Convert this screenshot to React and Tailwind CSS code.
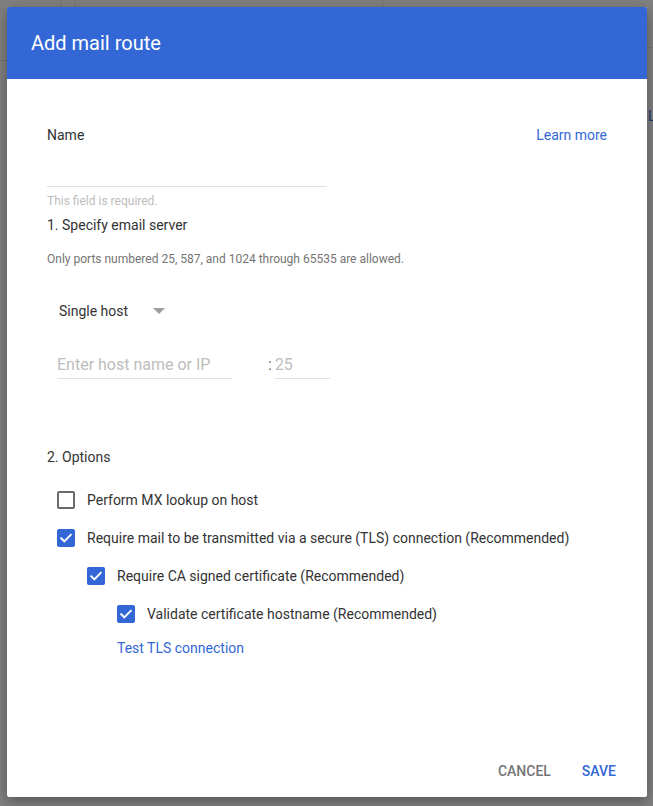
import React from 'react';

function Checkbox({ checked }) {
  if (!checked) {
    return <span className="block h-[18px] w-[18px] shrink-0 rounded-[2px] border-2 border-[#6b6b6b] bg-white" />;
  }
  return (
    <span className="flex h-[18px] w-[18px] shrink-0 items-center justify-center rounded-[2px] bg-[#3367d6]">
      <svg width="14" height="14" viewBox="0 0 14 14" fill="none">
        <path d="M2.2 7.3 L5.3 10.3 L11.8 3.8" stroke="white" strokeWidth="1.9" strokeLinecap="square" />
      </svg>
    </span>
  );
}

function OptionRow({ checked, label, indent }) {
  return (
    <div className={`flex h-[38px] items-center gap-3 ${indent}`}>
      <Checkbox checked={checked} />
      <span className="text-[14px] leading-5 text-[#333333]">{label}</span>
    </div>
  );
}

export default function App() {
  return (
    <div
      className="relative h-[806px] w-[653px] overflow-hidden bg-[#808080] p-[7px]"
      style={{ fontFamily: 'Roboto, "Liberation Sans", sans-serif' }}
    >
      {/* page behind the overlay */}
      <div className="absolute left-[60px] top-0 h-[7px] w-px bg-[#747474]" />
      <div className="absolute left-[75px] top-0 h-[7px] w-px bg-[#747474]" />
      <div className="absolute left-[382px] top-0 h-[7px] w-px bg-[#747474]" />
      <div className="absolute left-0 top-[60px] h-px w-[7px] bg-[#747474]" />
      <div className="absolute right-0 top-[47px] h-px w-[6px] bg-[#747474]" />
      <span className="absolute left-[648px] top-[106px] text-[14px] leading-5 text-[#1e3a6e]">L</span>

      <div className="relative flex h-[790px] w-[640px] flex-col overflow-hidden rounded-[2px] bg-white shadow-[0_4px_14px_rgba(0,0,0,0.35)]">
        <div className="flex h-[72px] shrink-0 items-center bg-[#3367d6] px-6">
          <h1 className="text-[20px] leading-7 text-white">Add mail route</h1>
        </div>

        <div className="flex-1 pl-10 pr-10 pt-[46px]">
          <div className="flex h-5 items-center justify-between">
            <span className="text-[14px] leading-5 text-[#333333]">Name</span>
            <span className="text-[14px] leading-5 text-[#3367d6]">Learn more</span>
          </div>
          <div className="h-[42px] w-[280px] border-b border-[#e0e0e0]" />
          <p className="mt-[6px] text-[12px] leading-4 text-[#bdbdbd]">This field is required.</p>
          <p className="mt-[6px] text-[14px] leading-5 text-[#333333]">1. Specify email server</p>
          <p className="mt-4 text-[12px] leading-4 text-[#757575]">
            Only ports numbered 25, 587, and 1024 through 65535 are allowed.
          </p>

          <div className="ml-3 mt-[34px] flex h-5 items-center">
            <span className="text-[14px] leading-5 text-[#333333]">Single host</span>
            <svg className="ml-[25px]" width="12" height="6" viewBox="0 0 12 6">
              <path d="M0 0 L12 0 L6 6 Z" fill="#9e9e9e" />
            </svg>
          </div>

          <div className="ml-[10px] mt-8 flex items-end">
            <div className="h-[26px] w-[175px] border-b border-[#e0e0e0] text-[16px] leading-6 text-[#bdbdbd]">
              Enter host name or IP
            </div>
            <span className="ml-[36px] h-[26px] text-[16px] leading-6 text-[#757575]">:</span>
            <div className="ml-[3px] h-[26px] w-[55px] border-b border-[#e0e0e0] text-[16px] leading-6 text-[#bdbdbd]">
              25
            </div>
          </div>

          <p className="mt-[68px] text-[14px] leading-5 text-[#333333]">2. Options</p>

          <div className="mt-[14px]">
            <OptionRow checked={false} label="Perform MX lookup on host" indent="ml-[10px]" />
            <OptionRow checked label="Require mail to be transmitted via a secure (TLS) connection (Recommended)" indent="ml-[10px]" />
            <OptionRow checked label="Require CA signed certificate (Recommended)" indent="ml-[40px]" />
            <OptionRow checked label="Validate certificate hostname (Recommended)" indent="ml-[70px]" />
          </div>
          <p className="ml-[70px] mt-[5px] text-[14px] leading-5 text-[#3367d6]">Test TLS connection</p>
        </div>

        <div className="flex shrink-0 items-center justify-end gap-[31px] pb-4 pr-[31px]">
          <button className="text-[14px] font-medium uppercase leading-5 text-[#757575]">Cancel</button>
          <button className="text-[14px] font-medium uppercase leading-5 text-[#3367d6]">Save</button>
        </div>
      </div>
    </div>
  );
}
